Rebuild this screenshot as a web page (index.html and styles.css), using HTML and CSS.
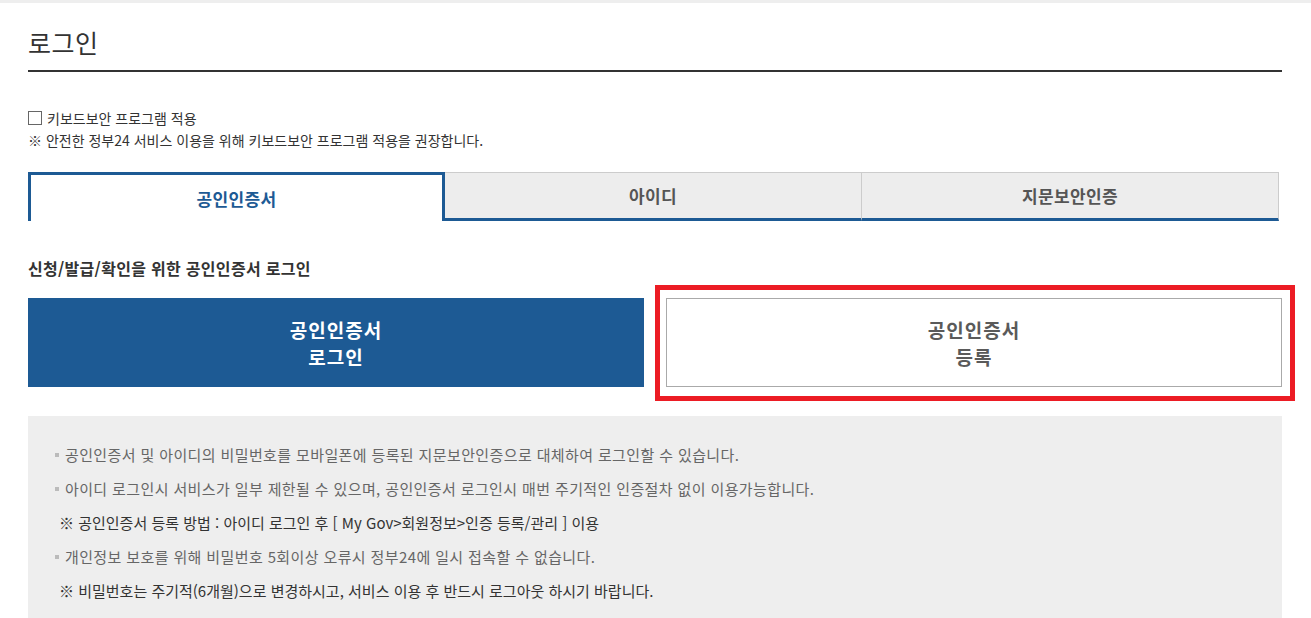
FILE: index.html
```html
<!DOCTYPE html>
<html lang="ko">
<head>
    <meta charset="UTF-8">
    <meta name="viewport" content="width=device-width, initial-scale=1.0">
    <title>정부24 - 로그인</title>
    <link rel="stylesheet" href="styles.css">
</head>
<body>
    <div class="top-band"></div>

    <div class="login-wrap">
        <h1 class="page-title">로그인</h1>

        <div class="keyboard-option">
            <label class="check-row">
                <span class="check-box"></span>
                키보드보안 프로그램 적용
            </label>
            <p class="check-note">※ 안전한 정부24 서비스 이용을 위해 키보드보안 프로그램 적용을 권장합니다.</p>
        </div>

        <!-- 로그인 방식 탭 -->
        <ul class="login-tabs">
            <li class="tab active">공인인증서</li>
            <li class="tab">아이디</li>
            <li class="tab">지문보안인증</li>
        </ul>

        <h2 class="section-title">신청/발급/확인을 위한 공인인증서 로그인</h2>

        <div class="cert-buttons">
            <button type="button" class="cert-btn primary">공인인증서<br>로그인</button>
            <button type="button" class="cert-btn outline highlighted">공인인증서<br>등록</button>
        </div>

        <div class="info-box">
            <p class="info-item">공인인증서 및 아이디의 비밀번호를 모바일폰에 등록된 지문보안인증으로 대체하여 로그인할 수 있습니다.</p>
            <p class="info-item">아이디 로그인시 서비스가 일부 제한될 수 있으며, 공인인증서 로그인시 매번 주기적인 인증절차 없이 이용가능합니다.</p>
            <p class="info-note">※ 공인인증서 등록 방법 : 아이디 로그인 후 [ My Gov&gt;회원정보&gt;인증 등록/관리 ] 이용</p>
            <p class="info-item">개인정보 보호를 위해 비밀번호 5회이상 오류시 정부24에 일시 접속할 수 없습니다.</p>
            <p class="info-note">※ 비밀번호는 주기적(6개월)으로 변경하시고, 서비스 이용 후 반드시 로그아웃 하시기 바랍니다.</p>
        </div>
    </div>
</body>
</html>
```

FILE: styles.css
```css
/* 기본 */
body {
    margin: 0;
    font-family: "Noto Sans CJK KR", "Noto Sans", sans-serif;
    color: #333;
    background-color: #fff;
}

.top-band {
    height: 3px;
    background-color: #eee;
}

.login-wrap {
    width: 1254px;
    padding-left: 28px;
}

/* 제목 */
.page-title {
    margin: 24px 0 0;
    padding-bottom: 13px;
    font-size: 25px;
    line-height: 30px;
    font-weight: 400;
    letter-spacing: 0.5px;
    color: #333;
    border-bottom: 2px solid #333;
}

/* 키보드보안 */
.keyboard-option {
    margin-top: 35px;
    font-size: 14px;
    line-height: 22px;
}

.check-row {
    display: flex;
    align-items: center;
    gap: 5px;
    cursor: pointer;
}

.check-box {
    width: 12px;
    height: 12px;
    border: 1px solid #666;
    background-color: #fff;
}

.check-note {
    margin: 0;
}

/* 탭 */
.login-tabs {
    list-style: none;
    margin: 21px 0 0;
    padding: 0;
    width: 1251px;
    display: grid;
    grid-template-columns: repeat(3, 1fr);
}

.tab {
    height: 45px;
    display: flex;
    align-items: center;
    justify-content: center;
    background-color: #ededed;
    border-top: 1px solid #ccc;
    border-right: 1px solid #ccc;
    border-bottom: 3px solid #1d5a94;
    font-size: 17px;
    font-weight: 700;
    letter-spacing: 0.4px;
    color: #555;
    cursor: pointer;
}

.tab.active {
    height: 46px;
    background-color: #fff;
    border: 3px solid #1d5a94;
    border-bottom: none;
    color: #1d5a94;
}

/* 공인인증서 버튼 */
.section-title {
    margin: 36px 0 0;
    font-size: 16px;
    line-height: 22px;
    font-weight: 700;
    letter-spacing: 0.3px;
    color: #333;
}

.cert-buttons {
    margin-top: 19px;
    display: grid;
    grid-template-columns: 1fr 1fr;
    gap: 22px;
}

.cert-btn {
    height: 89px;
    font-family: inherit;
    font-size: 19px;
    line-height: 27px;
    font-weight: 700;
    letter-spacing: 1px;
    cursor: pointer;
}

.cert-btn.primary {
    background-color: #1d5a94;
    border: none;
    color: #fff;
}

.cert-btn.outline {
    background-color: #fff;
    border: 1px solid #aaa;
    color: #5a5a5a;
}

/* 강조 표시 (빨간 테두리) */
.highlighted {
    position: relative;
}

.highlighted::after {
    content: '';
    position: absolute;
    top: -14px;
    left: -12px;
    right: -14px;
    bottom: -15px;
    border: 5px solid #ec1c24;
    pointer-events: none;
}

/* 안내 박스 */
.info-box {
    margin-top: 29px;
    padding: 22px 20px 26px 27px;
    background-color: #eee;
    font-size: 15px;
    line-height: 34px;
}

.info-box p {
    margin: 0;
}

.info-item {
    display: flex;
    align-items: center;
    gap: 6px;
    color: #666;
    letter-spacing: 0.38px;
}

.info-item::before {
    content: '';
    width: 4px;
    height: 4px;
    background-color: #bbb;
}

.info-note {
    padding-left: 4px;
    color: #333;
    letter-spacing: 0;
}
```
